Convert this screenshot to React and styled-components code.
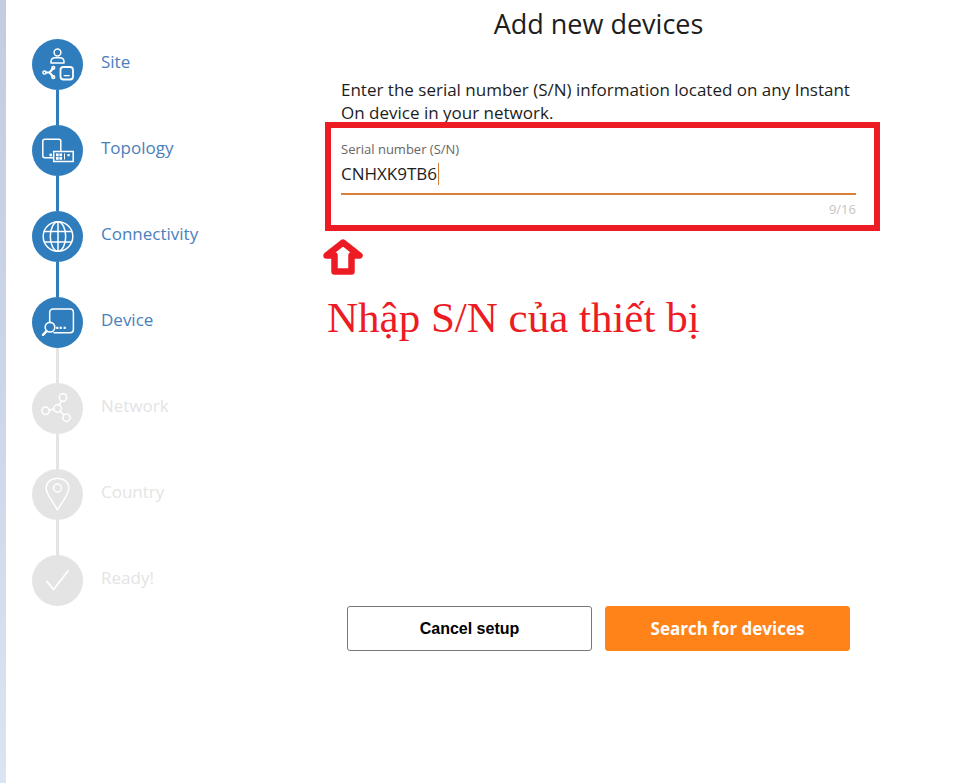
import React, { useState } from 'react'
import styled, { createGlobalStyle, ThemeProvider } from 'styled-components'

const theme = {
  colours: {
    primary: '#2f7dbd',
    stepText: '#4a80bb',
    disabled: '#e4e4e4',
    accent: '#ff8318',
    underline: '#d8803a',
    note: '#ed1c24',
    text: '#1d1d1d',
    textSecondary: '#666666',
    textHint: '#c4c4c4',
  },
}

const MAX_LENGTH = 16

const GlobalStyle = createGlobalStyle`
  * {
    box-sizing: border-box;
  }

  body {
    margin: 0;
    background: #ffffff;
    color: ${theme.colours.text};
    font-family: 'Open Sans', 'Noto Sans', sans-serif;
  }
`

const Page = styled.div`
  display: flex;
  min-height: 100vh;
`

const Edge = styled.div`
  flex: 0 0 6px;
  background: linear-gradient(#c4cde0, #ccd6e9 50%, #dae4f2);
`

const Sidebar = styled.nav`
  flex: 0 0 217px;
  padding: 39px 0 0 26px;
`

const Steps = styled.ol`
  margin: 0;
  padding: 0;
  list-style: none;
`

const Step = styled.li`
  display: grid;
  grid-template-columns: 51px 1fr;
  column-gap: 18px;
`

const Bullet = styled.span`
  width: 51px;
  height: 51px;
  border-radius: 50%;
  background: ${props => (props.$active ? props.theme.colours.primary : props.theme.colours.disabled)};

  svg {
    display: block;
  }
`

const Connector = styled.span`
  width: 3px;
  height: 35px;
  justify-self: center;
  background: ${props => (props.$active ? props.theme.colours.primary : props.theme.colours.disabled)};
`

const StepLink = styled.a`
  padding-top: 11px;
  font-size: 17px;
  line-height: 24px;
  text-decoration: none;
  color: ${props => (props.$active ? props.theme.colours.stepText : props.theme.colours.disabled)};
`

const Main = styled.main`
  flex: 1;
  display: flex;
  flex-direction: column;
  align-items: center;
  padding: 6px 24px 24px;
`

const Title = styled.h1`
  margin: 0 0 36px;
  font-size: 27px;
  font-weight: 400;
  line-height: 36px;
`

const Content = styled.div`
  width: 100%;
  max-width: 515px;
`

const Intro = styled.p`
  margin: 0 0 14px;
  font-size: 17px;
  line-height: 23px;
`

// the red frame sits on top of the form, slightly over the intro text
const Field = styled.div`
  position: relative;

  &::after {
    content: '';
    position: absolute;
    inset: -16px -24px -12px -16px;
    border: 6px solid ${props => props.theme.colours.note};
    pointer-events: none;
  }
`

const Label = styled.label`
  display: block;
  font-size: 13px;
  line-height: 22px;
  color: ${props => props.theme.colours.textSecondary};
`

const InputRow = styled.div`
  position: relative;
  border-bottom: 2px solid ${props => props.theme.colours.underline};
`

const Input = styled.input`
  display: block;
  width: 100%;
  height: 33px;
  padding: 0 0 6px;
  border: 0;
  outline: 0;
  background: transparent;
  font-family: inherit;
  font-size: 17px;
  color: inherit;
  caret-color: transparent;
`

const Caret = styled.span`
  position: absolute;
  top: 3px;
  left: 97px;
  width: 1px;
  height: 22px;
  background: ${props => props.theme.colours.underline};
`

const Counter = styled.p`
  margin: 4px 0 0;
  font-size: 13px;
  line-height: 20px;
  text-align: right;
  color: ${props => props.theme.colours.textHint};
`

const Note = styled.div`
  margin: 20px -18px 0;

  svg {
    display: block;
  }
`

const NoteText = styled.p`
  margin: 18px 0 0;
  padding-left: 4px;
  font-family: 'Liberation Serif', serif;
  font-size: 43px;
  line-height: 50px;
  color: ${props => props.theme.colours.note};
`

const Actions = styled.div`
  display: flex;
  gap: 13px;
  margin-top: 263px;
  padding: 0 6px;
`

const Button = styled.button`
  flex: 1;
  height: 45px;
  padding: 0;
  border: 1px solid;
  border-radius: 3px;
  font-weight: 700;
  cursor: pointer;
`

const CancelButton = styled(Button)`
  border-color: #777777;
  background: #ffffff;
  color: #000000;
  font-family: 'Liberation Sans', sans-serif;
  font-size: 16px;
`

const SearchButton = styled(Button)`
  border-color: ${props => props.theme.colours.accent};
  background: ${props => props.theme.colours.accent};
  color: #ffffff;
  font-family: inherit;
  font-size: 17px;
`

const Icon = ({ children }) => (
  <svg
    width="51"
    height="51"
    viewBox="0 0 51 51"
    fill="none"
    stroke="#ffffff"
    strokeWidth="1.5"
    strokeLinecap="round"
    strokeLinejoin="round"
    aria-hidden="true"
  >
    {children}
  </svg>
)

const SiteIcon = () => (
  <Icon>
    <circle cx="25.5" cy="13.5" r="3.4" />
    <path d="M19 24v-1.2c0-2.6 2-4 4.2-4h4.6c2.2 0 4.2 1.4 4.2 4V24z" />
    <path d="M14 33.5h3.5l3.5-4M17.5 33.5l3.5 4" strokeWidth="2.2" />
    <circle cx="12.5" cy="33.5" r="1.6" />
    <circle cx="21.3" cy="28.8" r="1.4" />
    <circle cx="21.3" cy="38.2" r="1.4" />
    <rect x="28.5" y="28" width="12.5" height="12.5" rx="3" strokeWidth="1.8" />
    <path d="M32.2 36.7h5" strokeWidth="1.2" />
  </Icon>
)

const TopologyIcon = () => (
  <Icon>
    <path d="M21 32.8h-8.2a2 2 0 0 1-2-2V16.3a2 2 0 0 1 2-2h14a2 2 0 0 1 2 2V26" />
    <circle cx="18.7" cy="30" r="0.7" fill="#ffffff" />
    <rect x="21.7" y="26.5" width="19.5" height="10" strokeLinejoin="miter" />
    <path
      d="M24 28.5h2.7v2.7H24zM27.4 28.5h2.7v2.7h-2.7zM24 32h2.7v2.7H24zM27.4 32h2.7v2.7h-2.7zM32 28.5h1v6h-1zM35.5 29h2.2v2.2h-2.2z"
      fill="#ffffff"
      stroke="none"
    />
  </Icon>
)

const GlobeIcon = () => (
  <Icon>
    <circle cx="26" cy="25.5" r="14.8" />
    <ellipse cx="26" cy="25.5" rx="7.7" ry="14.8" />
    <path d="M26 10.7v29.6M12.5 20.5h27M12.5 31h27" />
  </Icon>
)

const DeviceIcon = () => (
  <Icon>
    <path d="M17.7 25V15.2a3.2 3.2 0 0 1 3.2-3.2h17.3a3.2 3.2 0 0 1 3.2 3.2v17.3a3.2 3.2 0 0 1-3.2 3.2H22" />
    <circle cx="18" cy="30.2" r="4.8" strokeWidth="1.6" />
    <path d="M14.5 34.2l-3.5 3.6" strokeWidth="2.4" />
    <path d="M24.2 29.7h2.2v2.4h-2.2zM27.6 29.7h2.2v2.4h-2.2zM31.6 29.7h2.2v2.4h-2.2z" fill="#ffffff" stroke="none" />
  </Icon>
)

const NetworkIcon = () => (
  <Icon>
    <circle cx="13.5" cy="27.8" r="3.7" />
    <circle cx="25.5" cy="25.5" r="3.7" />
    <circle cx="31" cy="14.5" r="3.7" />
    <circle cx="34.5" cy="34.7" r="3.7" />
    <path d="M17.2 27.1l4.6-.9M27.2 22.2l2.1-4.4M28.2 28l3.6 4" />
  </Icon>
)

const CountryIcon = () => (
  <Icon>
    <path d="M25.5 41c-3-6.5-11.3-15-11.3-21.4C14.2 13 19.4 9.2 25.5 9.2S36.8 13 36.8 19.6C36.8 26 28.5 34.5 25.5 41z" />
    <circle cx="25.5" cy="19" r="4" />
  </Icon>
)

const ReadyIcon = () => (
  <Icon>
    <path d="M15 26.5l6.5 8L36 16" strokeWidth="1.8" />
  </Icon>
)

const steps = [
  { label: 'Site', icon: SiteIcon, active: true },
  { label: 'Topology', icon: TopologyIcon, active: true },
  { label: 'Connectivity', icon: GlobeIcon, active: true },
  { label: 'Device', icon: DeviceIcon, active: true },
  { label: 'Network', icon: NetworkIcon, active: false },
  { label: 'Country', icon: CountryIcon, active: false },
  { label: 'Ready!', icon: ReadyIcon, active: false },
]

const StepList = () => (
  <Steps>
    {steps.map(({ label, icon: StepIcon, active }, index) => (
      <Step key={label}>
        <Bullet $active={active}>
          <StepIcon />
        </Bullet>
        <StepLink href={`#${label}`} $active={active}>{label}</StepLink>
        {
          // no line below the last step
          index < steps.length - 1
            ? <Connector $active={active && steps[index + 1].active} />
            : null
        }
      </Step>
    ))}
  </Steps>
)

const App = () => {
  const [serial, setSerial] = useState('CNHXK9TB6')

  return (
    <ThemeProvider theme={theme}>
      <GlobalStyle />
      <Page>
        <Edge />
        <Sidebar>
          <StepList />
        </Sidebar>
        <Main>
          <Title>Add new devices</Title>
          <Content>
            <Intro>
              Enter the serial number (S/N) information located on any Instant On device in your network.
            </Intro>
            <Field>
              <Label htmlFor="serial">Serial number (S/N)</Label>
              <InputRow>
                <Input
                  id="serial"
                  type="text"
                  maxLength={MAX_LENGTH}
                  value={serial}
                  onChange={e => setSerial(e.target.value)}
                />
                <Caret />
              </InputRow>
              <Counter>{`${serial.length}/${MAX_LENGTH}`}</Counter>
            </Field>
            <Note>
              <svg width="40" height="36" viewBox="0 0 40 36" fill="none" aria-hidden="true">
                <path
                  d="M20 3.5L36.5 16.5H28.5V32.5H11.5V16.5H3.500z"
                  stroke={theme.colours.note}
                  strokeWidth="6.5"
                  strokeLinejoin="round"
                />
              </svg>
              <NoteText>Nhập S/N của thiết bị</NoteText>
            </Note>
            <Actions>
              <CancelButton type="button">Cancel setup</CancelButton>
              <SearchButton type="button">Search for devices</SearchButton>
            </Actions>
          </Content>
        </Main>
      </Page>
    </ThemeProvider>
  )
}

export default App
